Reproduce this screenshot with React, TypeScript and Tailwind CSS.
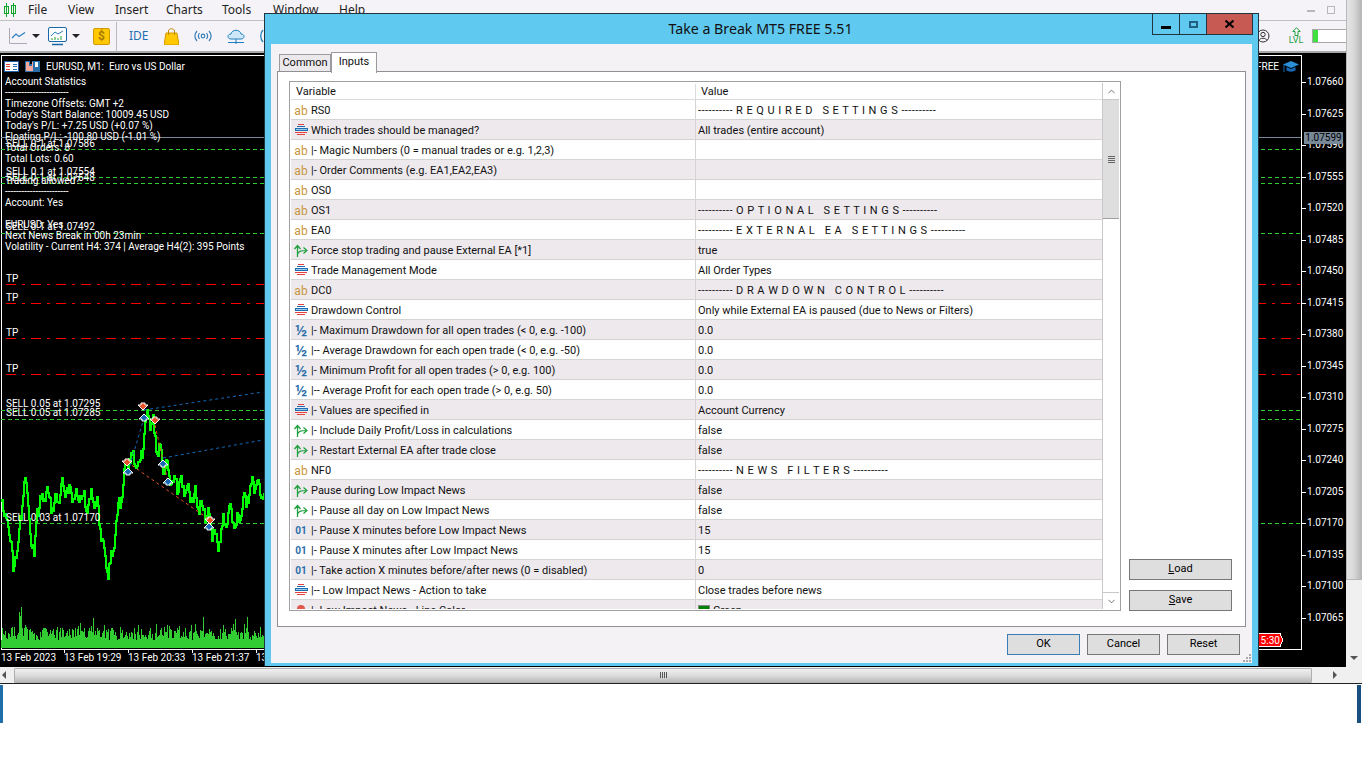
import { ChevronDown, ChevronUp } from "lucide-react";

type Kind = "ab" | "enum" | "bool" | "half" | "int" | "color";

const rows: [Kind, string, string][] = [
  ["ab", "RS0", "---------- R E Q U I R E D   S E T T I N G S ----------"],
  ["enum", "Which trades should be managed?", "All trades (entire account)"],
  ["ab", "|- Magic Numbers (0 = manual trades or e.g. 1,2,3)", ""],
  ["ab", "|- Order Comments (e.g. EA1,EA2,EA3)", ""],
  ["ab", "OS0", ""],
  ["ab", "OS1", "---------- O P T I O N A L   S E T T I N G S ----------"],
  ["ab", "EA0", "---------- E X T E R N A L   E A   S E T T I N G S ----------"],
  ["bool", "Force stop trading and pause External EA [*1]", "true"],
  ["enum", "Trade Management Mode", "All Order Types"],
  ["ab", "DC0", "---------- D R A W D O W N   C O N T R O L ----------"],
  ["enum", "Drawdown Control", "Only while External EA is paused (due to News or Filters)"],
  ["half", "|- Maximum Drawdown for all open trades (< 0, e.g. -100)", "0.0"],
  ["half", "|-- Average Drawdown for each open trade (< 0, e.g. -50)", "0.0"],
  ["half", "|- Minimum Profit for all open trades (> 0, e.g. 100)", "0.0"],
  ["half", "|-- Average Profit for each open trade (> 0, e.g. 50)", "0.0"],
  ["enum", "|- Values are specified in", "Account Currency"],
  ["bool", "|- Include Daily Profit/Loss in calculations", "false"],
  ["bool", "|- Restart External EA after trade close", "false"],
  ["ab", "NF0", "---------- N E W S   F I L T E R S ----------"],
  ["bool", "Pause during Low Impact News", "false"],
  ["bool", "|- Pause all day on Low Impact News", "false"],
  ["int", "|- Pause X minutes before Low Impact News", "15"],
  ["int", "|- Pause X minutes after Low Impact News", "15"],
  ["int", "|- Take action X minutes before/after news (0 = disabled)", "0"],
  ["enum", "|-- Low Impact News - Action to take", "Close trades before news"],
  ["color", "|- Low Impact News - Line Color", "Green"],
];

const menus: [string, string][] = [
  ["File", "w-[40px]"],
  ["View", "w-[47px]"],
  ["Insert", "w-[51px]"],
  ["Charts", "w-[56px]"],
  ["Tools", "w-[51px]"],
  ["Window", "w-[66px]"],
  ["Help", "w-[40px]"],
];

const prices = ["1.07660", "1.07625", "1.07590", "1.07555", "1.07520", "1.07485", "1.07450", "1.07415", "1.07380", "1.07345", "1.07310", "1.07275", "1.07240", "1.07205", "1.07170", "1.07135", "1.07100", "1.07065"];

const stats: [number, number, string][] = [
  [5, 76, "Account Statistics"],
  [5, 87, "-----------------------"],
  [5, 98, "Timezone Offsets: GMT +2"],
  [5, 109, "Today's Start Balance: 10009.45 USD"],
  [5, 120, "Today's P/L: +7.25 USD (+0.07 %)"],
  [5, 131, "Floating P/L: -100.80 USD (-1.01 %)"],
  [5, 142, "Total Orders: 8"],
  [5, 153, "Total Lots: 0.60"],
  [5, 175, "Trading allowed?"],
  [5, 186, "-----------------------"],
  [5, 197, "Account: Yes"],
  [5, 219, "EURUSD: Yes"],
  [5, 230, "Next News Break in 00h 23min"],
  [5, 241, "Volatility - Current H4: 374 | Average H4(2): 395 Points"],
  [6, 138, "SELL 0.1 at 1.07586"],
  [6, 166, "SELL 0.1 at 1.07554"],
  [6, 172, "SELL 0.1 at 1.07548"],
  [6, 221, "SELL 0.1 at 1.07492"],
  [6, 398, "SELL 0.05 at 1.07295"],
  [6, 407, "SELL 0.05 at 1.07285"],
  [6, 512, "SELL 0.03 at 1.07170"],
  [6, 273, "TP"],
  [6, 292, "TP"],
  [6, 327, "TP"],
  [6, 363, "TP"],
];

const keys: [number, number][] = [[1, 500], [5, 520], [10, 540], [12, 572], [15, 548], [20, 520], [23, 470], [27, 510], [33, 560], [36, 505], [45, 492], [52, 503], [62, 486], [70, 494], [80, 494], [87, 505], [92, 492], [97, 512], [103, 555], [107, 566], [112, 553], [115, 520], [120, 497], [125, 462], [128, 458], [131, 455], [135, 462], [138, 468], [142, 438], [145, 420], [148, 416], [152, 424], [155, 442], [160, 458], [165, 470], [170, 482], [178, 480], [185, 492], [195, 498], [205, 512], [210, 525], [217, 542], [222, 522], [228, 512], [235, 524], [240, 510], [247, 492], [253, 480], [258, 487], [263, 497]];

function seeded(seed: number) {
  let s = seed;
  return () => {
    s = (s * 16807) % 2147483647;
    return s / 2147483647;
  };
}

// bars run from one close to the next so the line stays jagged, with black holes in it
function pricePath() {
  const rnd = seeded(71);
  let d = "";
  let prev = 500;
  for (let x = 1; x < 264; x++) {
    const i = keys.findIndex((k) => k[0] >= x);
    const [x0, y0] = keys[Math.max(i - 1, 0)];
    const [x1, y1] = keys[i];
    const y = x1 === x0 ? y1 : y0 + ((y1 - y0) * (x - x0)) / (x1 - x0);
    const wave = Math.sin(x * 0.9) * 7 + (rnd() - 0.5) * 12;
    const close = y + wave;
    d += `M${x + 0.5} ${Math.min(prev, close).toFixed(0)}V${(Math.max(prev, close) + 2).toFixed(0)}`;
    prev = close;
  }
  return d;
}

function volumePath() {
  const rnd = seeded(29);
  let d = "";
  for (let x = 1; x < 264; x++) {
    const h = 8 + rnd() * 13 + (rnd() > 0.82 ? rnd() * 13 : 0) + (x > 18 && x < 22 ? 16 : 0);
    d += `M${x + 0.5} ${(648 - h).toFixed(0)}V648`;
  }
  return d;
}

function TypeIcon({ kind }: { kind: Kind }) {
  if (kind === "ab") return <span className="w-[16px] text-center text-[12px] leading-none text-[#c9963f]">ab</span>;
  if (kind === "half") return <span className="w-[16px] text-center text-[16px] font-semibold leading-none text-[#2a6fa8]">½</span>;
  if (kind === "int") return <span className="w-[16px] text-center text-[10px] font-bold leading-none text-[#2a6fa8]">01</span>;
  if (kind === "enum")
    return (
      <svg width="16" height="13" viewBox="0 0 16 13" shapeRendering="crispEdges">
        <path d="M5 0.5h6" stroke="#e8403a" />
        <path d="M4 2.5h8" stroke="#1f6fb5" />
        <path d="M2 4.5h12v2H2z" fill="#9cc8ea" stroke="#1f6fb5" />
        <path d="M2 8.5h12" stroke="#e8403a" />
        <path d="M4 10.5h8" stroke="#e8403a" />
      </svg>
    );
  if (kind === "bool")
    return (
      <svg width="16" height="14" viewBox="0 0 16 14" fill="none">
        <path d="M4.5 13V2M1.5 5l3-3.5 3 3.5" stroke="#1fa03f" strokeWidth="1.3" />
        <path d="M4.5 10C6 7 8 6.5 13 6.5M10.5 3.5l3.5 3-3.5 3" stroke="#1fa03f" strokeWidth="1.2" />
      </svg>
    );
  return (
    <svg width="16" height="14" viewBox="0 0 16 14">
      <circle cx="8" cy="5" r="4" fill="#e2574c" />
      <rect x="3" y="9" width="10" height="3" fill="#c9a090" />
    </svg>
  );
}

function Win({ children, className }: { children: React.ReactNode; className: string }) {
  return <div className={`flex items-center justify-center bg-[#dedede] text-[11px] text-black ${className}`}>{children}</div>;
}

function Chart() {
  return (
    <div className="relative min-h-0 flex-1 bg-black text-white">
      <div className="absolute left-[1px] top-[2px] h-[595px] w-[1301px] border border-white" />
      <svg className="absolute left-0 top-[-53px]" width="1346" height="667" shapeRendering="crispEdges" fill="none">
        <path d="M1 137H1301" stroke="#778899" />
        {[149.5, 177.5, 183.5, 233.5, 410.5, 419.5, 523.5].map((y) => (
          <path key={y} d={`M1 ${y}H1301`} stroke="#32cd32" strokeDasharray="4 3" />
        ))}
        {[284.5, 303.5, 338.5, 374.5].map((y) => (
          <path key={y} d={`M6 ${y}H1301`} stroke="#ff0000" strokeDasharray="10 6 3 6" />
        ))}
        <path d={pricePath()} stroke="#00ff00" strokeWidth="2" />
        <path d={volumePath()} stroke="#32cd32" />
        <g shapeRendering="auto">
          <path d="M128 472L144 418M144 410L263 392M163 458L263 440" stroke="#1668b5" strokeDasharray="3 3" />
          <path d="M127 462L210 520M155 425L168 482" stroke="#e8502a" strokeDasharray="3 3" />
          {[[143, 406], [155, 420], [127, 462], [210, 520]].map(([x, y]) => (
            <path key={x} d={`M${x - 2} ${y - 3}h4v2h3l-5 5-5-5h3z`} fill="#e8502a" stroke="#fff" />
          ))}
          {[[144, 418], [163, 464], [128, 472], [168, 482], [209, 527]].map(([x, y]) => (
            <path key={x} d={`M${x - 2} ${y + 3}h4v-2h3l-5-5-5 5h3z`} fill="#1668b5" stroke="#fff" />
          ))}
        </g>
        {[64, 128, 192, 256].map((x) => (
          <path key={x} d={`M${x + 0.5} 649V653`} stroke="#fff" />
        ))}
        {prices.map((p, i) => (
          <path key={p} d={`M1302 ${Math.round(82 + i * 31.5) + 0.5}h4`} stroke="#fff" />
        ))}
        <path d="M1250 633.5H1280l3 6.5-3 6.5H1250z" fill="#ff0000" stroke="#fff" />
      </svg>

      <div className="absolute left-[4px] top-[8px] flex items-center gap-[6px]">
        <svg width="15" height="11" viewBox="0 0 15 11" shapeRendering="crispEdges">
          <rect x="0.5" y="0.5" width="14" height="10" fill="#fff" stroke="#1f5fa8" />
          <path d="M2 3h4M2 5.5h4M2 8h4" stroke="#e8403a" />
          <path d="M9 3h4M9 5.5h4M9 8h4" stroke="#1f6fb5" />
        </svg>
        <svg width="15" height="11" viewBox="0 0 15 11" shapeRendering="crispEdges">
          <path d="M0 0h5v3h2V0h8v11H0z" fill="#2a6fa8" />
          <path d="M1 1h3v4h3V1h1v9H1z" fill="#f4a79a" />
          <rect x="10" y="1" width="3" height="5" fill="#fff" />
        </svg>
        <span className="text-[10px] leading-none whitespace-pre">EURUSD, M1:  Euro vs US Dollar</span>
      </div>

      {stats.map(([x, y, text]) => (
        <span key={y + text} style={{ top: y - 53, left: x }} className="absolute text-[10px] leading-[11px] whitespace-pre">
          {text}
        </span>
      ))}

      <span className="absolute left-[1256px] top-[8px] text-[10px] leading-[11px]">FREE</span>
      <svg className="absolute left-[1283px] top-[8px]" width="16" height="13" viewBox="0 0 16 13">
        <path d="M8 0l8 3.5-8 3.5L0 3.5z" fill="#2a8fd8" />
        <path d="M3.5 6v3.5c2.5 1.5 6.5 1.5 9 0V6L8 8z" fill="#1668b5" />
        <path d="M1 4v7" stroke="#1668b5" />
      </svg>

      {prices.map((p, i) => (
        <span key={p} style={{ top: Math.round(82 + i * 31.5) - 59 }} className="absolute left-[1307px] text-[10px] leading-[11px]">
          {p}
        </span>
      ))}
      <span className="absolute left-[1304px] top-[79px] h-[12px] w-[39px] bg-[#778899] text-center text-[10px] leading-[12px] text-black">1.07599</span>

      <span className="absolute left-[1255px] top-[581px] text-[10px] leading-[13px]">15:30</span>

      {["13 Feb 2023", "13 Feb 19:29", "13 Feb 20:33", "13 Feb 21:37", "13"].map((t, i) => (
        <span key={t} style={{ left: i === 0 ? 1 : i * 64 }} className="absolute top-[599px] text-[10px] leading-[11px]">
          {t}
        </span>
      ))}
    </div>
  );
}

function Dialog() {
  return (
    <div className="absolute left-[264px] top-[13px] flex h-[653px] w-[995px] flex-col border-x border-t border-[#22343f] bg-[#5fc9f0]">
      <div className="relative flex h-[30px] shrink-0 items-center justify-center pr-[2px] font-['Noto_Sans',sans-serif] text-[14.2px] text-[#111]">
        Take a Break MT5 FREE 5.51
        <div className="absolute right-[5px] top-0 flex h-[21px]">
          <div className="flex w-[28px] items-center justify-center border-x border-b border-[#22343f]">
            <div className="mt-[6px] h-[3px] w-[10px] bg-black" />
          </div>
          <div className="flex w-[26px] items-center justify-center border-b border-[#22343f]">
            <div className="h-[7px] w-[9px] border-2 border-[#1f5f7f]" />
          </div>
          <div className="flex w-[47px] items-center justify-center border-x border-b border-[#22343f] bg-[#c75b54]">
            <svg width="9" height="8" viewBox="0 0 9 8" fill="none" stroke="#000" strokeWidth="2">
              <path d="M0.5 0.5l8 7M8.5 0.5l-8 7" />
            </svg>
          </div>
        </div>
      </div>

      <div className="relative mx-[6px] mb-[3px] flex min-h-0 flex-1 flex-col bg-[#f5f2f6] px-[6px]">
        <div className="flex h-[27px] shrink-0 items-end pl-[2px]">
          <div className="mb-[-1px] flex h-[18px] w-[52px] items-center justify-center border border-[#9a9a9f] bg-[#ece9ed] pt-[1px] text-[11px] text-[#111]">Common</div>
          <div className="relative z-10 mb-[-2px] flex h-[21px] w-[46px] items-center justify-center border border-b-0 border-[#9a9a9f] bg-white pb-[2px] text-[11px] text-[#111]">Inputs</div>
        </div>

        <div className="relative flex h-[556px] shrink-0 gap-[8px] border border-[#8f8f94] bg-white pl-[11px] pr-[13px] pt-[9px]">
          <div className="flex h-[530px] w-[832px] shrink-0 border border-[#a0a0a0] p-[1px]">
            <div className="min-w-0 flex-1 overflow-hidden">
              <div className="flex h-[17px] border-b border-[#dcdcdc] pt-[1px] text-[11px] leading-[15px] text-[#111]">
                <div className="w-[405px] border-r border-[#dcdcdc] pl-[5px]">Variable</div>
                <div className="pl-[5px]">Value</div>
              </div>
              {rows.map(([kind, name, value], i) => (
                <div key={name} className={`flex h-[20px] border-b border-[#d4d4d4] text-[11px] leading-[17px] text-[#111] ${i % 2 === 1 ? "bg-[#ede9ed]" : "bg-white"}`}>
                  <div className="flex w-[405px] shrink-0 items-center gap-[2px] border-r border-[#d4d4d4] pl-[2px] pt-[2px]">
                    <TypeIcon kind={kind} />
                    <span className="whitespace-pre">{name}</span>
                  </div>
                  <div className={`flex items-center gap-[3px] pl-[2px] pt-[2px] whitespace-pre ${value.startsWith("-") ? "tracking-[0.45px]" : ""}`}>
                    {kind === "color" && <span className="h-[11px] w-[12px] border border-[#888] bg-[#008000]" />}
                    {value}
                  </div>
                </div>
              ))}
            </div>
            <div className="flex w-[17px] shrink-0 flex-col border-l border-[#c8c8c8]">
              <div className="flex h-[17px] items-center justify-center border-b border-[#c8c8c8] bg-white text-[#666]">
                <ChevronUp size={11} />
              </div>
              <div className="flex h-[119px] flex-col items-center justify-center gap-[1px] border-b border-[#a0a0a0] bg-[#dedede]">
                <div className="h-[1px] w-[7px] bg-[#666]" />
                <div className="h-[1px] w-[7px] bg-[#666]" />
                <div className="h-[1px] w-[7px] bg-[#666]" />
                <div className="h-[1px] w-[7px] bg-[#666]" />
              </div>
              <div className="flex-1 bg-white" />
              <div className="flex h-[17px] items-center justify-center border-t border-[#c8c8c8] bg-white text-[#666]">
                <ChevronDown size={11} />
              </div>
            </div>
          </div>
          <div className="flex h-[530px] flex-1 flex-col justify-end gap-[10px]">
            <Win className="h-[21px] border border-[#777]"><span><u>L</u>oad</span></Win>
            <Win className="h-[21px] border border-[#777]"><span><u>S</u>ave</span></Win>
          </div>
        </div>

        <div className="flex flex-1 items-start justify-end gap-[7px] pr-[6px] pt-[7px]">
          <Win className="h-[21px] w-[73px] border border-[#3a7db5]">OK</Win>
          <Win className="h-[21px] w-[73px] border border-[#777]">Cancel</Win>
          <Win className="h-[21px] w-[73px] border border-[#777]">Reset</Win>
        </div>
        <svg className="absolute bottom-[1px] right-[1px]" width="8" height="8" viewBox="0 0 8 8" fill="#aaa">
          <path d="M6 0h2v2H6zM3 3h2v2H3zM6 3h2v2H6zM0 6h2v2H0zM3 6h2v2H3zM6 6h2v2H6z" />
        </svg>
      </div>
    </div>
  );
}

export default function App() {
  return (
    <div className="relative flex h-[768px] w-[1366px] flex-col overflow-hidden bg-white font-['Roboto','Liberation_Sans',sans-serif]">
      <div className="flex h-[667px] w-[1362px] shrink-0">
        <div className="flex min-w-0 flex-1 flex-col">
          <div className="flex h-[21px] shrink-0 items-center border-b border-[#c0c0c0] bg-[#f5f3f7] pl-[3px] font-['Noto_Sans',sans-serif] text-[12px] text-[#222]">
            <svg width="25" height="15" viewBox="0 0 25 15" className="shrink-0" shapeRendering="crispEdges" fill="none" stroke="#0fa52a">
              <path d="M3.5 0v14M1.5 3.5h4v7h-4z" />
              <path d="M10.5 0v14M8.5 2.5h4v8h-4z" />
            </svg>
            {menus.map(([m, w]) => (
              <span key={m} className={w}>{m}</span>
            ))}
            <div className="ml-auto mr-[11px] flex items-center gap-[12px]">
              <div className="mt-[2px] h-[2px] w-[8px] bg-[#b8b8b8]" />
              <div className="h-[8px] w-[8px] border border-[#b8b8b8]" />
            </div>
          </div>
          <div className="flex h-[32px] shrink-0 items-center border-b-2 border-[#a8a8a8] bg-[#f5f3f7] pl-[9px]">
            <svg width="18" height="16" viewBox="0 0 18 16" fill="none">
              <path d="M0.5 0v15.5H18" stroke="#aab" />
              <path d="M3 10l4-4 3 2.5 6-4" stroke="#2a7fc0" strokeWidth="1.2" />
            </svg>
            <div className="ml-[5px] h-0 w-0 border-x-[4px] border-t-[4px] border-x-transparent border-t-[#222]" />
            <svg className="ml-[8px]" width="19" height="19" viewBox="0 0 19 19" fill="none">
              <rect x="0.5" y="0.5" width="18" height="14" rx="1.5" fill="#fff" stroke="#1668a8" />
              <path d="M3 9l4-4 3 2 5-3" stroke="#2a7fc0" />
              <path d="M4 13v-2M7 13v-3M10 13v-2M13 13v-4" stroke="#22a030" />
              <path d="M4 17.5h11" stroke="#1668a8" strokeWidth="1.5" />
            </svg>
            <div className="ml-[5px] h-0 w-0 border-x-[4px] border-t-[4px] border-x-transparent border-t-[#222]" />
            <div className="ml-[13px] flex h-[17px] w-[17px] items-center justify-center rounded-[2px] border border-[#d09a00] bg-[#ffc800] text-[12px] font-bold leading-none text-[#a67c00]">$</div>
            <div className="ml-[6px] h-[29px] w-[1px] bg-[#bbb]" />
            <span className="ml-[12px] font-['Noto_Sans',sans-serif] text-[12px] text-[#1f6fb5]">IDE</span>
            <svg className="ml-[15px]" width="15" height="17" viewBox="0 0 15 17">
              <path d="M2 5h11l2 12H0z" fill="#ffc800" stroke="#d09a00" />
              <path d="M4.5 7V3c0-3 6-3 6 0v4" fill="none" stroke="#c08a00" />
            </svg>
            <svg className="ml-[15px]" width="18" height="12" viewBox="0 0 18 12" fill="none" stroke="#3a7fb8" strokeWidth="1.2">
              <path d="M3 1C0.5 4 0.5 8 3 11M15 1c2.5 3 2.5 7 0 10M5.5 3c-1.5 2-1.5 4 0 6M12.5 3c1.5 2 1.5 4 0 6" />
              <circle cx="9" cy="6" r="1.8" />
            </svg>
            <svg className="ml-[15px]" width="18" height="17" viewBox="0 0 18 17" fill="none" stroke="#1f7fc0">
              <path d="M4 11C0 11 0 6 4 6c1-5 9-5 10 0 4 0 4 5 0 5z" fill="#cfe8f8" />
              <path d="M1 14.5h16M9 11v5" />
            </svg>
            <svg className="ml-[14px]" width="6" height="14" viewBox="0 0 6 14" fill="none" stroke="#1f7fc0" strokeWidth="1.3">
              <path d="M4 1C1 4 1 10 4 13" />
            </svg>
            <div className="ml-auto flex items-center">
              <svg width="14" height="14" viewBox="0 0 14 14" fill="none" stroke="#333">
                <circle cx="7" cy="7" r="6" />
                <circle cx="7" cy="5.5" r="2.2" />
                <path d="M3 11.5c1-3 7-3 8 0" />
              </svg>
              <div className="ml-[19px] flex w-[14px] flex-col items-center">
                <svg width="9" height="9" viewBox="0 0 9 9" fill="none" stroke="#1fa03f">
                  <path d="M3 8.5V4.5H0.8L4.5 0.7 8.2 4.5H6V8.5z" />
                </svg>
                <span className="text-[9px] leading-[9px] text-[#1fa03f]">LVL</span>
              </div>
              <div className="ml-[9px] flex h-[14px] w-[34px] border-y border-l border-[#a8a8a8] bg-white">
                <div className="w-[5px] bg-[#3fe03f]" />
              </div>
            </div>
          </div>
          <Chart />
        </div>
        <div className="flex w-[16px] shrink-0 flex-col bg-[#f0f0f0]">
          <div className="h-[580px] border-x border-b border-[#b8b8b8] bg-gradient-to-r from-[#e4e4e4] via-[#d8d8d8] to-[#b8b8b8]" />
          <div className="flex flex-1 items-end justify-center pb-[7px]">
            <div className="h-0 w-0 border-x-[4px] border-t-[4px] border-x-transparent border-t-[#555]" />
          </div>
        </div>
      </div>
      <div className="flex h-[17px] w-[1362px] shrink-0 items-center border-b border-[#222] bg-[#f0f0f0] pl-[2px]">
        <div className="h-0 w-0 border-y-[4px] border-r-[4px] border-y-transparent border-r-[#555]" />
        <div className="ml-[8px] flex h-[15px] w-[1298px] items-center justify-center gap-[1px] rounded-[1px] border border-[#b0b0b0] bg-gradient-to-b from-[#f0f0f0] via-[#dcdcdc] to-[#b8b8b8]">
          <div className="h-[6px] w-[1px] bg-[#555]" />
          <div className="h-[6px] w-[1px] bg-[#555]" />
          <div className="h-[6px] w-[1px] bg-[#555]" />
          <div className="h-[6px] w-[1px] bg-[#555]" />
        </div>
        <div className="ml-[21px] h-0 w-0 border-y-[4px] border-l-[4px] border-y-transparent border-l-[#555]" />
      </div>
      <div className="flex w-[1361px] justify-between pt-[1px]">
        <div className="h-[38px] w-[3px] bg-[#1f6fa8]" />
        <div className="h-[38px] w-[4px] bg-[#1a4f80]" />
      </div>
      <Dialog />
    </div>
  );
}
